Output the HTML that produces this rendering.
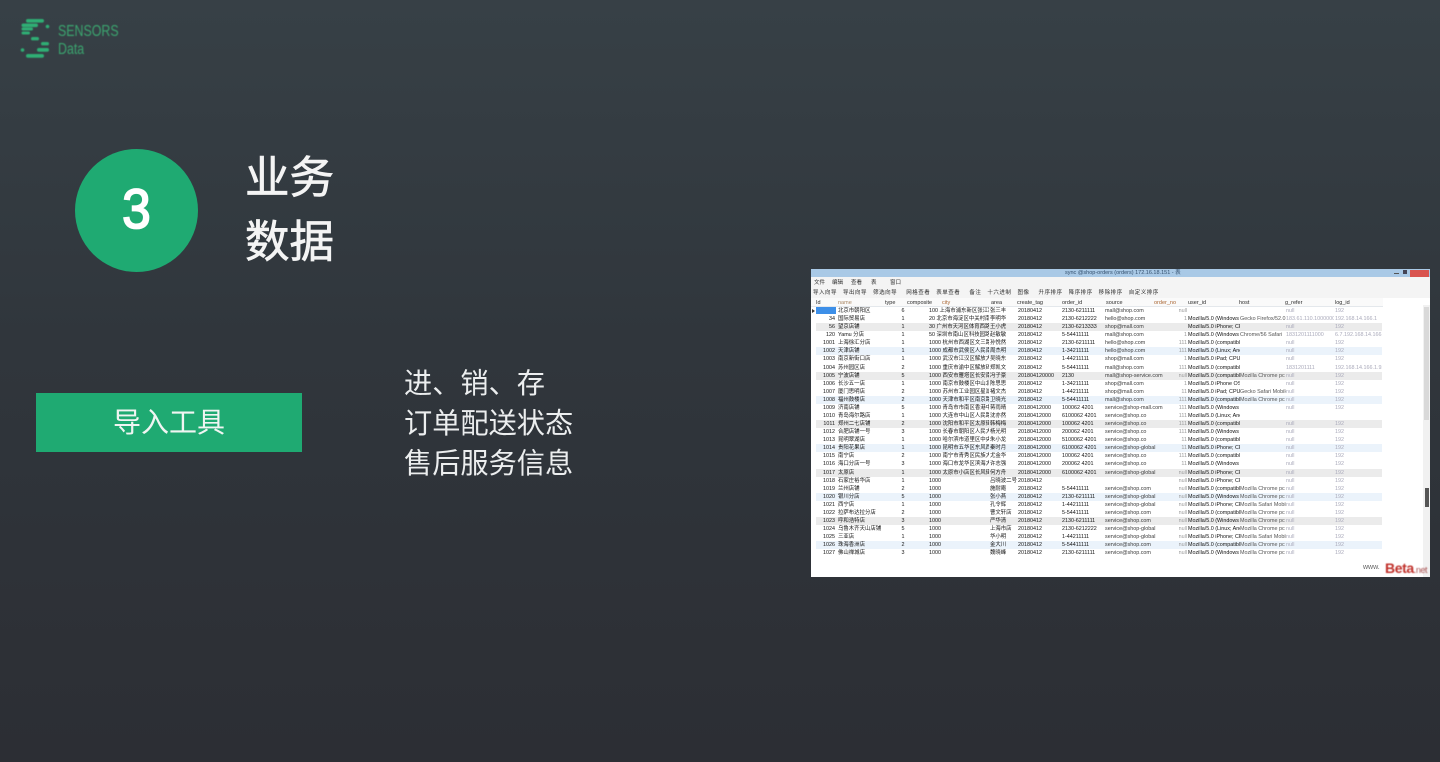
<!DOCTYPE html>
<html lang="zh-CN">
<head>
<meta charset="utf-8">
<title>业务数据</title>
<style>
html,body{margin:0;padding:0;width:1440px;height:762px;overflow:hidden}
body{position:relative;background:linear-gradient(180deg,#374046 0%,#30363c 45%,#2c2e34 100%);font-family:"Liberation Sans","Noto Sans CJK SC",sans-serif}
.a{position:absolute;white-space:nowrap}
.cjk{font-family:"Liberation Sans","Noto Sans CJK SC",sans-serif}
.circle{left:75px;top:149px;width:123px;height:123px;border-radius:50%;background:#1faa72}
.num{left:75px;top:173px;width:123px;text-align:center;font-size:56px;line-height:72px;font-weight:400;color:#fff;transform:scaleX(.92);-webkit-text-stroke:1.8px #fff}
.h{left:245px;font-size:44.5px;line-height:50px;font-weight:400;color:#f4f4f4;-webkit-text-stroke:.7px #f4f4f4;filter:blur(.3px)}
.btn{left:36px;top:393px;width:266px;height:59px;background:#1faa72;color:#f0f5f2;font-size:28px;line-height:60px;text-align:center;font-weight:400}
.t{left:404px;font-size:28.2px;line-height:40px;color:#eceeef;font-weight:400}
.logo{left:0;top:0;width:130px;height:64px;filter:blur(.45px)}
.lt{color:#3ba56f;font-size:15.5px;line-height:16px;transform-origin:0 0;transform:scaleX(.8)}
.shot{left:811px;top:269px;width:619px;height:308px;background:#fff;overflow:hidden}
.shot .a{color:#2b2b2b}
.title{left:0;top:0;width:619px;height:8px;background:#a9c9e6}
.menu{left:0;top:8px;width:619px;height:21px;background:#f4f4f4}
.head{left:0;top:29px;width:572px;height:9px;background:#fafafa;border-bottom:1px solid #e4e8ec;box-sizing:border-box}
.tiny{font-size:5.5px;line-height:8px;filter:blur(.35px)}
#g{position:absolute;left:5px;top:38px;width:566px;font-size:5.4px;line-height:8px;color:#141414;filter:blur(.35px)}
.r{height:8.08px;overflow:hidden;position:relative;white-space:nowrap}
.r.y{background:#ebebeb}
.r.b{background:#ebf3fb}
.r i{position:absolute;top:0;font-style:normal;overflow:hidden}
.r i:nth-child(1){left:0;width:19px;text-align:right}
.r i:nth-child(2){left:22px;width:46px}
.r i:nth-child(3){left:84px;width:6px;text-align:center}
.r i:nth-child(4){left:113px;width:60px}
.r i:nth-child(5){left:174px;width:27px}
.r i:nth-child(6){left:202px;width:42px}
.r i:nth-child(7){left:246px;width:42px}
.r i:nth-child(8){left:289px;width:60px;color:#3a3a3a}
.r i:nth-child(9){left:350px;width:21px;text-align:right;color:#999}
.r i:nth-child(10){left:372px;width:52px}
.r i:nth-child(11){left:424px;width:46px;color:#555}
.r i:nth-child(12){left:470px;width:48px;color:#aab}
.r i:nth-child(13){left:519px;width:47px;color:#aab}
.sb1{left:612px;top:36px;width:7px;height:272px;background:#f1f1f1}
.sb2{left:613px;top:38px;width:5px;height:113px;background:#d9d9d9}
.sb3{left:614px;top:219px;width:4px;height:19px;background:#555}
</style>
</head>
<body>
<div class="a logo">
<svg width="130" height="64" viewBox="0 0 130 64">
<g fill="#2fae74">
<rect x="26" y="19" width="18" height="3.6" rx="1.8"/>
<rect x="21.5" y="23.5" width="16.5" height="3.6" rx="1.8"/>
<circle cx="47.5" cy="26.5" r="1.8"/>
<rect x="21.5" y="27.5" width="11.5" height="3" rx="1.5"/>
<rect x="21.5" y="31.5" width="8.5" height="3" rx="1.5"/>
<rect x="31" y="37" width="8" height="3.4" rx="1.7"/>
<rect x="41" y="42" width="8" height="3.4" rx="1.7"/>
<rect x="37" y="48" width="12" height="3.8" rx="1.9"/>
<circle cx="22.5" cy="50" r="1.8"/>
<rect x="26" y="54" width="18" height="3.8" rx="1.9"/>
</g>
</svg>
<div class="a lt" style="left:58px;top:24px">SENSORS</div>
<div class="a lt" style="left:58px;top:41.5px">Data</div>
</div>

<div class="a circle"></div>
<div class="a num">3</div>
<div class="a h cjk" style="top:154px">业务</div>
<div class="a h cjk" style="top:218px">数据</div>

<div class="a btn cjk">导入工具</div>

<div class="a t cjk" style="top:363px">进、销、存</div>
<div class="a t cjk" style="top:403px">订单配送状态</div>
<div class="a t cjk" style="top:443px">售后服务信息</div>

<div class="a shot">
  <div class="a title"></div>
  <div class="a tiny" style="left:254px;top:0;color:#34506e">sync @shop-orders (orders) 172.16.18.151 - 表</div>
  <div class="a" style="left:599px;top:1px;width:19px;height:7px;background:#d9544f"></div>
  <div class="a" style="left:583px;top:4px;width:5px;height:1px;background:#555"></div>
  <div class="a" style="left:592px;top:1px;width:4px;height:4px;background:#445"></div>
  <div class="a menu"></div>
  <div class="a tiny" style="left:3px;top:10px">文件</div>
  <div class="a tiny" style="left:21px;top:10px">编辑</div>
  <div class="a tiny" style="left:40px;top:10px">查看</div>
  <div class="a tiny" style="left:60px;top:10px">表</div>
  <div class="a tiny" style="left:79px;top:10px">窗口</div>
  <div class="a tiny" style="left:2px;top:20px;letter-spacing:.5px;word-spacing:1px">导入向导 &nbsp;导出向导 &nbsp;筛选向导 &nbsp; 网格查看 &nbsp;表单查看 &nbsp; 备注 &nbsp;十六进制 &nbsp;图像 &nbsp; 升序排序 &nbsp;降序排序 &nbsp;移除排序 &nbsp;自定义排序</div>
  <div class="a head"></div>
  <div class="a tiny" style="left:5px;top:29.5px">Id</div>
  <div class="a tiny" style="left:27px;top:29.5px;color:#a86">name</div>
  <div class="a tiny" style="left:74px;top:29.5px">type</div>
  <div class="a tiny" style="left:96px;top:29.5px">composite</div>
  <div class="a tiny" style="left:131px;top:29.5px;color:#a63">city</div>
  <div class="a tiny" style="left:180px;top:29.5px">area</div>
  <div class="a tiny" style="left:206px;top:29.5px">create_tag</div>
  <div class="a tiny" style="left:251px;top:29.5px">order_id</div>
  <div class="a tiny" style="left:295px;top:29.5px">source</div>
  <div class="a tiny" style="left:343px;top:29.5px;color:#a63">order_no</div>
  <div class="a tiny" style="left:377px;top:29.5px">user_id</div>
  <div class="a tiny" style="left:428px;top:29.5px">host</div>
  <div class="a tiny" style="left:474px;top:29.5px">g_refer</div>
  <div class="a tiny" style="left:524px;top:29.5px">log_id</div>

  <div class="a" style="left:5px;top:38px;width:20px;height:7px;background:#3d8fe8"></div>
  <div class="a" style="left:1px;top:40px;width:0;height:0;border-left:3px solid #333;border-top:2px solid transparent;border-bottom:2px solid transparent"></div>

  <div id="g">
<div class="r"><i></i><i>北京市朝阳区</i><i>6</i><i>100 上海市浦东新区张江路88号</i><i>张三丰</i><i>20180412</i><i>2130-6211111</i><i>mall@shop.com</i><i>null</i><i></i><i></i><i>null</i><i>192</i></div>
<div class="r"><i>34</i><i>国际贸易店</i><i>1</i><i>20 北京市海淀区中关村南大街</i><i>李明华</i><i>20180412</i><i>2130-6212222</i><i>hello@shop.com</i><i>1</i><i>Mozilla/5.0 (Windows NT</i><i>Gecko Firefox/52.0 Mo</i><i>183.61.110.1000000</i><i>192.168.14.166.1</i></div>
<div class="r y"><i>56</i><i>望京店铺</i><i>1</i><i>30 广州市天河区体育西路</i><i>王小虎</i><i>20180412</i><i>2130-6213333</i><i>shop@mall.com</i><i></i><i>Mozilla/5.0 iPhone; CPU</i><i></i><i>null</i><i>192</i></div>
<div class="r"><i>120</i><i>Yamu 分店</i><i>1</i><i>50 深圳市南山区科技园路</i><i>赵敏敏</i><i>20180412</i><i>5-54411111</i><i>mall@shop.com</i><i>1</i><i>Mozilla/5.0 (Windows NT</i><i>Chrome/56 Safari</i><i>1831201111000</i><i>6.7.192.168.14.166</i></div>
<div class="r"><i>1001</i><i>上海徐汇分店</i><i>1</i><i>1000 杭州市西湖区文三路20号</i><i>孙悦然</i><i>20180412</i><i>2130-6211111</i><i>hello@shop.com</i><i>111</i><i>Mozilla/5.0 (compatible;</i><i></i><i>null</i><i>192</i></div>
<div class="r b"><i>1002</i><i>天津店铺</i><i>1</i><i>1000 成都市武侯区人民南路</i><i>周杰明</i><i>20180412</i><i>1-34211111</i><i>hello@shop.com</i><i>111</i><i>Mozilla/5.0 (Linux; And</i><i></i><i>null</i><i>192</i></div>
<div class="r"><i>1003</i><i>南京新街口店</i><i>1</i><i>1000 武汉市江汉区解放大道</i><i>吴晓东</i><i>20180412</i><i>1-44211111</i><i>shop@mall.com</i><i>1</i><i>Mozilla/5.0 iPad; CPU</i><i></i><i>null</i><i>192</i></div>
<div class="r"><i>1004</i><i>苏州园区店</i><i>2</i><i>1000 重庆市渝中区解放碑</i><i>郑凯文</i><i>20180412</i><i>5-54411111</i><i>mall@shop.com</i><i>111</i><i>Mozilla/5.0 (compatible;</i><i></i><i>1831201111</i><i>192.168.14.166.1.92</i></div>
<div class="r y"><i>1005</i><i>宁波店铺</i><i>5</i><i>1000 西安市雁塔区长安南路10号</i><i>冯子豪</i><i>201804120000</i><i>2130</i><i>mall@shop-service.com</i><i>null</i><i>Mozilla/5.0 (compatible; Ms</i><i>Mozilla Chrome pc safari</i><i>null</i><i>192</i></div>
<div class="r"><i>1006</i><i>长沙五一店</i><i>1</i><i>1000 南京市鼓楼区中山北路</i><i>陈思思</i><i>20180412</i><i>1-34211111</i><i>shop@mall.com</i><i>1</i><i>Mozilla/5.0 iPhone OS</i><i></i><i>null</i><i>192</i></div>
<div class="r"><i>1007</i><i>厦门思明店</i><i>2</i><i>1000 苏州市工业园区星湖街</i><i>褚文杰</i><i>20180412</i><i>1-44211111</i><i>shop@mall.com</i><i>11</i><i>Mozilla/5.0 iPad; CPU</i><i>Gecko Safari Mobile</i><i>null</i><i>192</i></div>
<div class="r b"><i>1008</i><i>福州鼓楼店</i><i>2</i><i>1000 天津市和平区南京路</i><i>卫晓光</i><i>20180412</i><i>5-54411111</i><i>mall@shop.com</i><i>111</i><i>Mozilla/5.0 (compatible;</i><i>Mozilla Chrome pc safari</i><i>null</i><i>192</i></div>
<div class="r"><i>1009</i><i>济南店铺</i><i>5</i><i>1000 青岛市市南区香港中路</i><i>蒋雨晴</i><i>20180412000</i><i>100062 4201</i><i>service@shop-mall.com</i><i>111</i><i>Mozilla/5.0 (Windows NT</i><i></i><i>null</i><i>192</i></div>
<div class="r"><i>1010</i><i>青岛海尔路店</i><i>1</i><i>1000 大连市中山区人民路</i><i>沈亦然</i><i>20180412000</i><i>6100062 4201</i><i>service@shop.co</i><i>111</i><i>Mozilla/5.0 (Linux; And</i><i></i><i></i><i></i></div>
<div class="r y"><i>1011</i><i>郑州二七店铺</i><i>2</i><i>1000 沈阳市和平区太原街20号</i><i>韩梅梅</i><i>20180412000</i><i>100062 4201</i><i>service@shop.co</i><i>111</i><i>Mozilla/5.0 (compatible;</i><i></i><i>null</i><i>192</i></div>
<div class="r"><i>1012</i><i>合肥店铺一号</i><i>3</i><i>1000 长春市朝阳区人民大街</i><i>杨光明</i><i>20180412000</i><i>200062 4201</i><i>service@shop.co</i><i>111</i><i>Mozilla/5.0 (Windows NT</i><i></i><i>null</i><i>192</i></div>
<div class="r"><i>1013</i><i>昆明翠湖店</i><i>1</i><i>1000 哈尔滨市道里区中央大街</i><i>朱小龙</i><i>20180412000</i><i>5100062 4201</i><i>service@shop.co</i><i>11</i><i>Mozilla/5.0 (compatible;</i><i></i><i>null</i><i>192</i></div>
<div class="r b"><i>1014</i><i>贵阳花果店</i><i>1</i><i>1000 昆明市五华区东风西路</i><i>秦时月</i><i>20180412000</i><i>6100062 4201</i><i>service@shop-global</i><i>11</i><i>Mozilla/5.0 iPhone; CPU</i><i></i><i>null</i><i>192</i></div>
<div class="r"><i>1015</i><i>南宁店</i><i>2</i><i>1000 南宁市青秀区民族大道</i><i>尤金华</i><i>20180412000</i><i>100062 4201</i><i>service@shop.co</i><i>111</i><i>Mozilla/5.0 (compatible;</i><i></i><i>null</i><i>192</i></div>
<div class="r"><i>1016</i><i>海口分店一号</i><i>3</i><i>1000 海口市龙华区滨海大道</i><i>许志强</i><i>20180412000</i><i>200062 4201</i><i>service@shop.co</i><i>11</i><i>Mozilla/5.0 (Windows NT</i><i></i><i>null</i><i>192</i></div>
<div class="r y"><i>1017</i><i>太原店</i><i>1</i><i>1000 太原市小店区长风街道</i><i>何方舟</i><i>20180412000</i><i>6100062 4201</i><i>service@shop-global</i><i>null</i><i>Mozilla/5.0 iPhone; CPU</i><i></i><i>null</i><i>192</i></div>
<div class="r"><i>1018</i><i>石家庄裕华店</i><i>1</i><i>1000</i><i>吕晓波二号</i><i>20180412</i><i></i><i></i><i>null</i><i>Mozilla/5.0 iPhone; CPU</i><i></i><i>null</i><i>192</i></div>
<div class="r"><i>1019</i><i>兰州店铺</i><i>2</i><i>1000</i><i>施耐庵</i><i>20180412</i><i>5-54411111</i><i>service@shop.com</i><i>null</i><i>Mozilla/5.0 (compatible;</i><i>Mozilla Chrome pc safari</i><i>null</i><i>192</i></div>
<div class="r b"><i>1020</i><i>银川分店</i><i>5</i><i>1000</i><i>张小燕</i><i>20180412</i><i>2130-6211111</i><i>service@shop-global</i><i>null</i><i>Mozilla/5.0 (Windows NT</i><i>Mozilla Chrome pc safari</i><i>null</i><i>192</i></div>
<div class="r"><i>1021</i><i>西宁店</i><i>1</i><i>1000</i><i>孔令辉</i><i>20180412</i><i>1-44211111</i><i>service@shop-global</i><i>null</i><i>Mozilla/5.0 iPhone; CPU</i><i>Mozilla Safari Mobile</i><i>null</i><i>192</i></div>
<div class="r"><i>1022</i><i>拉萨布达拉分店</i><i>2</i><i>1000</i><i>曹文轩店</i><i>20180412</i><i>5-54411111</i><i>service@shop.com</i><i>null</i><i>Mozilla/5.0 (compatible;</i><i>Mozilla Chrome pc safari</i><i>null</i><i>192</i></div>
<div class="r y"><i>1023</i><i>呼和浩特店</i><i>3</i><i>1000</i><i>严华清</i><i>20180412</i><i>2130-6211111</i><i>service@shop.com</i><i>null</i><i>Mozilla/5.0 (Windows NT</i><i>Mozilla Chrome pc safari</i><i>null</i><i>192</i></div>
<div class="r"><i>1024</i><i>乌鲁木齐天山店铺</i><i>5</i><i>1000</i><i>上海市店</i><i>20180412</i><i>2130-6212222</i><i>service@shop-global</i><i>null</i><i>Mozilla/5.0 (Linux; And</i><i>Mozilla Chrome pc safari</i><i>null</i><i>192</i></div>
<div class="r"><i>1025</i><i>三亚店</i><i>1</i><i>1000</i><i>华小明</i><i>20180412</i><i>1-44211111</i><i>service@shop-global</i><i>null</i><i>Mozilla/5.0 iPhone; CPU</i><i>Mozilla Safari Mobile</i><i>null</i><i>192</i></div>
<div class="r b"><i>1026</i><i>珠海香洲店</i><i>2</i><i>1000</i><i>金大川</i><i>20180412</i><i>5-54411111</i><i>service@shop.com</i><i>null</i><i>Mozilla/5.0 (compatible;</i><i>Mozilla Chrome pc safari</i><i>null</i><i>192</i></div>
<div class="r"><i>1027</i><i>佛山禅城店</i><i>3</i><i>1000</i><i>魏晓峰</i><i>20180412</i><i>2130-6211111</i><i>service@shop.com</i><i>null</i><i>Mozilla/5.0 (Windows NT</i><i>Mozilla Chrome pc safari</i><i>null</i><i>192</i></div>
  </div>

  <div class="a sb1"></div>
  <div class="a sb2"></div>
  <div class="a sb3"></div>

  <div class="a" style="left:552px;top:295px;font-size:7px;line-height:8px;color:#666;filter:blur(.3px)">www.</div>
  <div class="a" style="left:574px;top:292px;font-size:14px;line-height:14px;font-weight:700;filter:blur(.4px);letter-spacing:-.4px"><span style="color:#c0302a">Beta</span><span style="color:#a55;font-size:9px;font-weight:400">.net</span></div>
</div>
</body>
</html>
